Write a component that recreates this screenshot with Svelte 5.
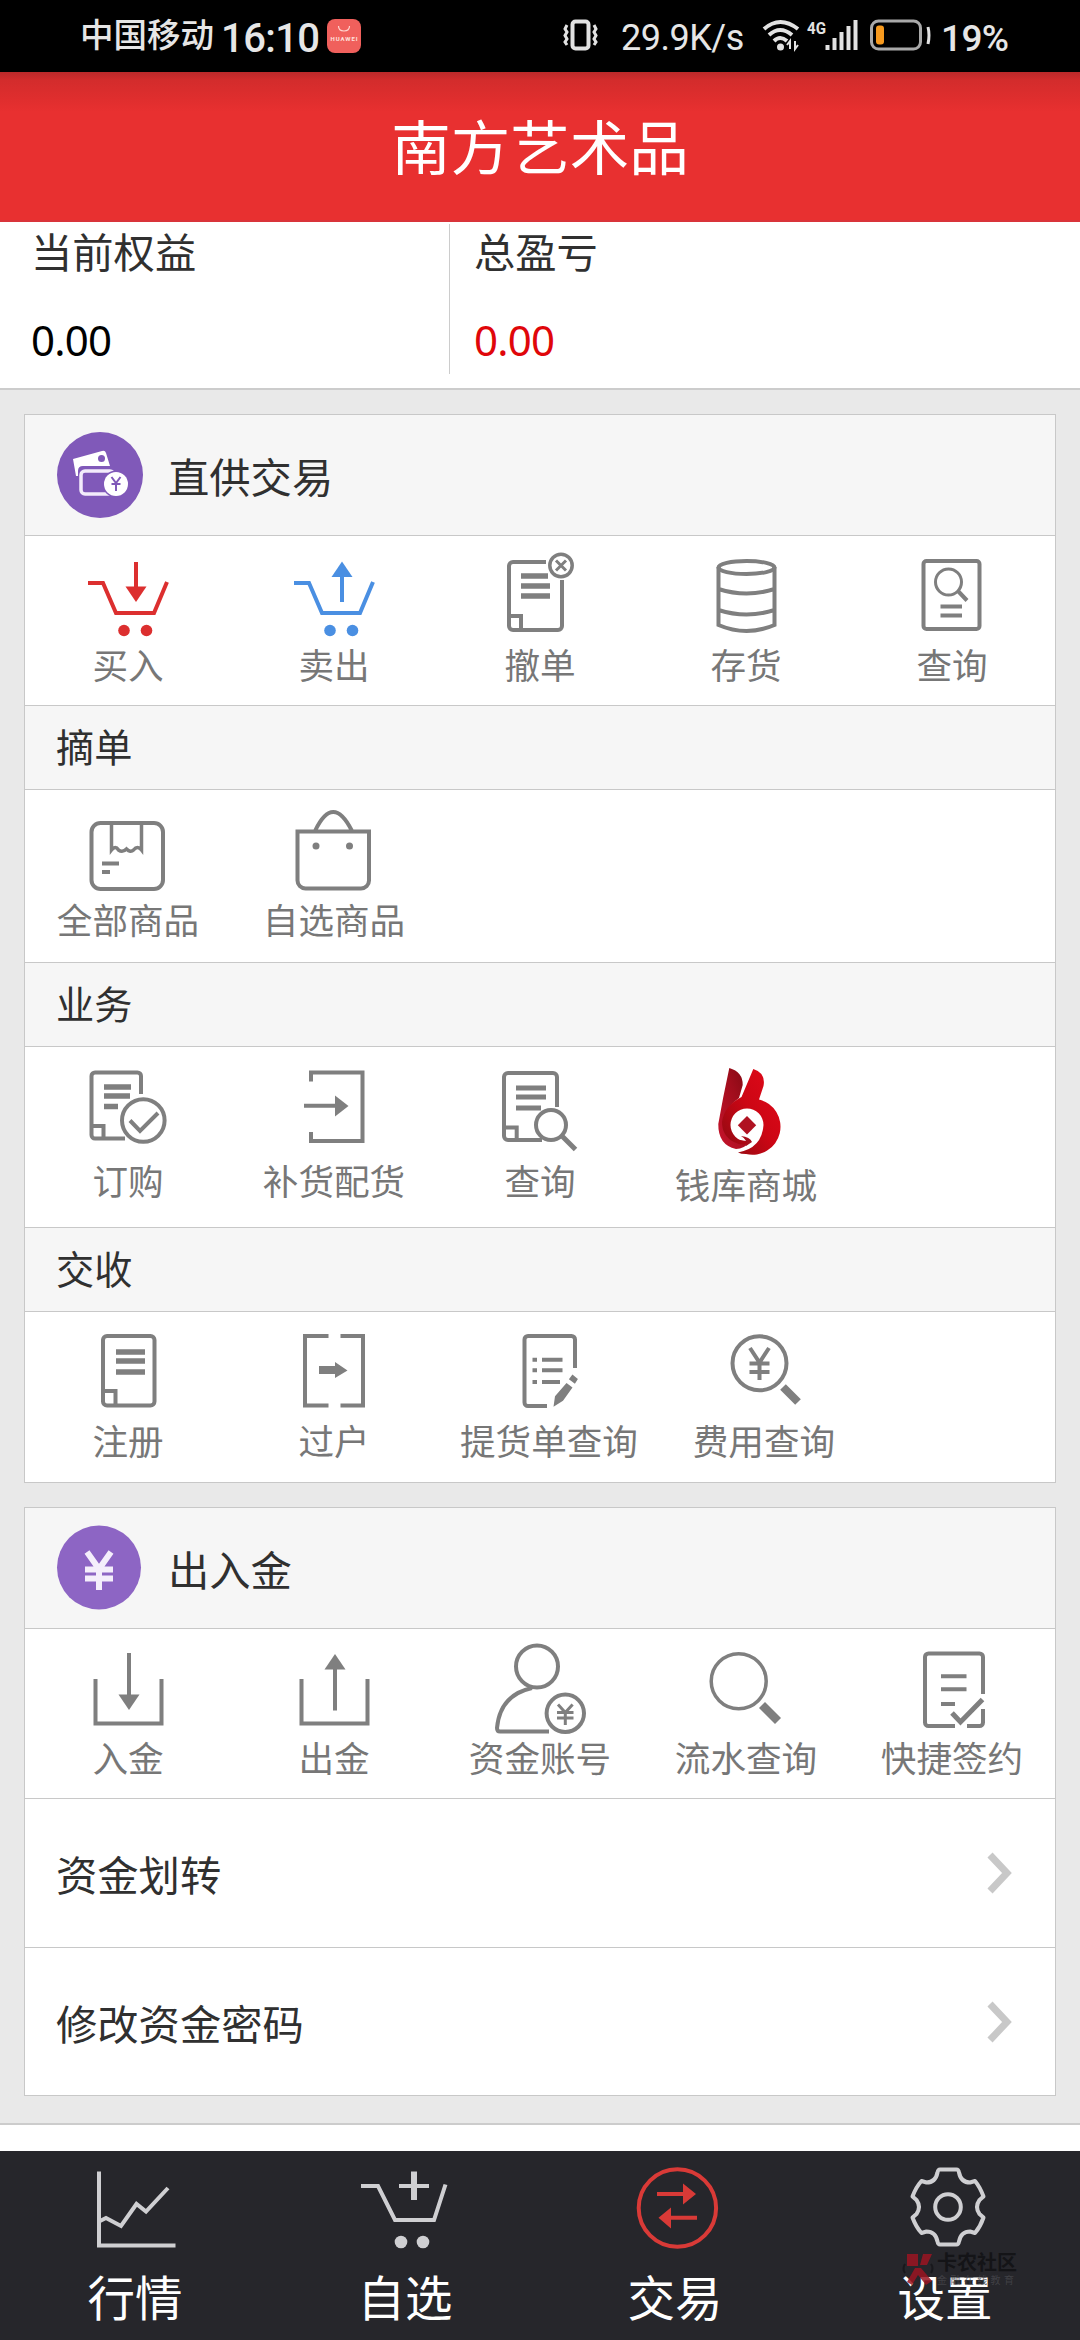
<script lang="ts">
  interface Action {
    label: string;
    icon: string;
    color?: string;
    low?: boolean;
  }

  interface Group {
    title?: string;
    size: "regular" | "medium" | "tall";
    actions: Action[];
  }

  const cart = `<path d="M20 47h15l13 30h38l13-31"/><g fill="currentColor" stroke="none"><circle cx="56" cy="94.500" r="5.800"/><circle cx="78.500" cy="94.500" r="5.800"/></g>`;

  // Inner markup of the action icons, drawn in a 120x111 box.
  const icons: Record<string, string> = {
    buy: `${cart}<path d="M68 26v26"/><path d="M57.500 50.500h21L68 66z" fill="currentColor" stroke="none"/>`,
    sell: `${cart}<path d="M68 66V40"/><path d="M57.500 41h21L68 25.500z" fill="currentColor" stroke="none"/>`,
    cancel: `<path d="M66 26H33a4 4 0 0 0-4 4v60a4 4 0 0 0 4 4h45a4 4 0 0 0 4-4V44M29 80h12v14"/><path stroke-width="5.500" d="M41 40h27M41 50h29M41 60h29"/><circle cx="81" cy="29.500" r="11.200" stroke-width="3.500"/><path stroke-width="3" d="M76 24.500l10 10M86 24.500l-10 10"/>`,
    stock: `<ellipse cx="60.500" cy="31.500" rx="28" ry="6.500"/><path d="M32.500 31v58q28 12 56 0V31M32.500 53q28 9 56 0M32.500 74q28 9 56 0"/>`,
    query: `<rect x="31.500" y="25" width="56" height="68" rx="3"/><circle cx="56.500" cy="46" r="13" stroke-width="3"/><path d="M66 55l9 9.500M48.500 70.500h21.500M48.500 79.500h21.500"/>`,
    box: `<rect x="23.500" y="32" width="71.500" height="66" rx="9"/><path stroke-width="3.500" d="M43.500 32v27q4-5 7 0 4 3 8-1 4 4 7 1 4-5 8 0V32"/><path d="M34 72.500h17M34 81h8"/>`,
    bag: `<path d="M23.500 40.500h71.500v49a8 8 0 0 1-8 8h-55.500a8 8 0 0 1-8-8zM41 40q18-38 37 0"/><g fill="currentColor" stroke="none"><circle cx="42" cy="55" r="3.500"/><circle cx="75.500" cy="55" r="3.500"/></g>`,
    order: `<path d="M73 42V24a3.500 3.500 0 0 0-3.500-3.500H27a3.500 3.500 0 0 0-3.500 3.500v59a3.500 3.500 0 0 0 3.500 3.500h30M24 74h11.500v12"/><path stroke-width="5.500" d="M36 35h27M36 44h26M36 54.500h14"/><circle cx="75.300" cy="68.500" r="21.300"/><path d="M62 68.500l10 10.500 18-18"/>`,
    restock: `<path d="M37 29.500V20.500h51.500V89H37v-9M30 53.700h32"/><path d="M61 43.500v21l13.500-10.500z" fill="currentColor" stroke="none"/>`,
    docSearch: `<path d="M77 55V25a4 4 0 0 0-4-4H28a4 4 0 0 0-4 4v59a4 4 0 0 0 4 4h34M24 75.500h12.700V88"/><path stroke-width="5.200" d="M36 36h30M36 45h30M36 56h25"/><circle cx="71" cy="73" r="15"/><path d="M82 84l13.500 13.500" stroke-width="5"/>`,
    mall: `<defs><linearGradient id="earL" x1="0" y1="1" x2="1" y2="0"><stop offset="0" stop-color="#c8142c"/><stop offset=".6" stop-color="#a00d1c"/><stop offset="1" stop-color="#7a0810"/></linearGradient><linearGradient id="earR" x1="0" y1="1" x2="1" y2="0"><stop offset="0" stop-color="#8a0a12"/><stop offset=".5" stop-color="#cc0614"/><stop offset="1" stop-color="#e20a1a"/></linearGradient></defs>
      <g stroke="none"><path fill="url(#earL)" d="M43.300 16Q57 20 56.700 33L53 46Q38 57 38 72 38 89 65 89 58 97 50 97 32 93 32.300 72Q37 45 43.300 16z"/><path fill="url(#earR)" d="M67.300 17Q80 21 77.500 34L73 47.500A28 28 0 0 1 60 102Q55 102 52 100.500 76 96 77.500 73A16.500 16.500 0 1 0 61 89.500L65 88Q60 96 48 90 36 84 36 70 38 54 55.500 45z"/><path fill="#b01222" d="M61 64l9.200 9.300-9.200 9.300-9.200-9.300z"/><path fill="#a5101c" d="M55 84q9 1 11 6l-6 4q2-6-5-10z"/></g>`,
    register: `<rect x="35" y="24" width="51.500" height="69.500" rx="4"/><path d="M35 79h12.500v14"/><path stroke-width="5.500" d="M48 40h29M48 49h29M48 60h29"/>`,
    transfer: `<path d="M54.500 24H31v69.500h23.500M66.500 24H89v69.500H66.500"/><path d="M45 54h16v-4l12.500 8.500L61 66v-4H45z" fill="currentColor" stroke="none"/>`,
    pickup: `<path d="M86 56V27.500a3.500 3.500 0 0 0-3.500-3.500H39a3.500 3.500 0 0 0-3.500 3.500v63a3.500 3.500 0 0 0 3.500 3.500h19"/><path d="M43.500 47.700h4.500M53 47.700h20.500M43.500 58.300h4.500M53 58.300h20.500M43.500 70h4.500M53 70h18"/><path fill="currentColor" stroke="none" d="M83.400 62.500l5.500 4.500-3 4.700-6-4.500zM77.500 71l6 4.500L74 88.700l-9.500 6 1.500-10.500z"/>`,
    fee: `<circle cx="55.500" cy="51.300" r="27"/><path d="M46 36l9.500 14.500L65 36M55.500 50v18M45.500 51.500h20M45.500 60h20"/><path stroke-width="8" d="M79 75l15 15"/>`,
    deposit: `<path d="M27.500 50v44.500h66V50M61 24v43"/><path d="M50.500 65.500h21L61 81z" fill="currentColor" stroke="none"/>`,
    withdraw: `<path d="M27.500 50v44.500h66V50M61 81.500V38"/><path d="M50.500 40.500h21L61 25z" fill="currentColor" stroke="none"/>`,
    account: `<circle cx="57" cy="37.500" r="21"/><path d="M52 59Q20 66 17 99q0 3.500 3 3.500h49"/><circle cx="85.300" cy="84.300" r="18.700"/><path stroke-width="3" d="M78 75.500l7.300 8 7.300-8M85.300 83.500V96M77 83.500h16.500M77 89h16.500"/>`,
    flow: `<circle cx="52.700" cy="52.300" r="27.500" stroke-width="3.500"/><path stroke-width="8.500" d="M76 76l16 16"/>`,
    sign: `<path d="M91 65V28a3.500 3.500 0 0 0-3.500-3.500h-51A3.500 3.500 0 0 0 33 28v65.500a3.500 3.500 0 0 0 3.500 3.500H63M75 97h12.500a3.500 3.500 0 0 0 3.500-3.500V80M49 47.300h25.500M49 60.300h25.500M49 75h14"/><path stroke-width="5" d="M60 84l8.500 9L90.500 70.500"/>`,
  };

  const tradeGroups: Group[] = [
    {
      size: "regular",
      actions: [
        { label: "买入", icon: "buy", color: "#dc2f2f" },
        { label: "卖出", icon: "sell", color: "#4a8fe2" },
        { label: "撤单", icon: "cancel" },
        { label: "存货", icon: "stock" },
        { label: "查询", icon: "query" },
      ],
    },
    {
      title: "摘单",
      size: "medium",
      actions: [
        { label: "全部商品", icon: "box" },
        { label: "自选商品", icon: "bag" },
      ],
    },
    {
      title: "业务",
      size: "tall",
      actions: [
        { label: "订购", icon: "order" },
        { label: "补货配货", icon: "restock" },
        { label: "查询", icon: "docSearch" },
        { label: "钱库商城", icon: "mall", low: true },
      ],
    },
    {
      title: "交收",
      size: "regular",
      actions: [
        { label: "注册", icon: "register" },
        { label: "过户", icon: "transfer" },
        { label: "提货单查询", icon: "pickup" },
        { label: "费用查询", icon: "fee" },
      ],
    },
  ];

  const fundGroup: Group = {
    size: "regular",
    actions: [
      { label: "入金", icon: "deposit" },
      { label: "出金", icon: "withdraw" },
      { label: "资金账号", icon: "account" },
      { label: "流水查询", icon: "flow" },
      { label: "快捷签约", icon: "sign" },
    ],
  };

  const links = ["资金划转", "修改资金密码"];

  const tabs = [
    {
      label: "行情",
      icon: `<path d="M24 20.500v74h76.500M25 70l6-3 15 8 15.500-22 9.500 7.500L93 37"/>`,
    },
    {
      label: "自选",
      icon: `<path d="M16 35h17l17 34h39l11.500-35.500M54 35h30"/><path stroke-width="6" d="M69 20.500v28.500"/><g fill="currentColor" stroke="none"><circle cx="56" cy="91" r="6.300"/><circle cx="78" cy="91" r="6.300"/></g>`,
    },
    {
      label: "交易",
      icon: `<circle cx="62.400" cy="57" r="38.700"/><path d="M42 43h27M82 66.700H55"/><path fill="currentColor" stroke="none" d="M68 32.500v21L81 43zM56 56.500v21L43.500 66.700z"/>`,
    },
    {
      label: "设置",
      icon: `<path stroke-linejoin="round" d="M55 18.500h16.500q2 0 2.500 3 2 10 11 10l5-1.500q5 6 8.500 15.500l-4 3.500q-5 7 0 14l4 3.500q-3 9-8.500 15.500l-5-1.500q-9 0-11 10-.5 3-2.500 3H55q-2 0-2.500-3-2-10-11-10l-5 1.500Q31 76 27.500 66.500l4-3.500q5-7 0-14l-4-3.500Q31 36 36.500 30l5 1.500q9 0 11-10 .5-3 2.500-3z"/><circle cx="63" cy="56" r="12.800"/>`,
    },
  ];

  let activeTab = $state("交易");
</script>

{#snippet actionRow(group: Group)}
  {#if group.title}
    <h3 class="group-title">{group.title}</h3>
  {/if}
  <div class="actions {group.size}">
    {#each group.actions as action}
      <div class="action" style:color={action.color}>
        <svg viewBox="0 0 120 111" fill="none" stroke="currentColor" stroke-width="4">{@html icons[action.icon]}</svg>
        <span class:low={action.low}>{action.label}</span>
      </div>
    {/each}
  </div>
{/snippet}

<div class="screen">
  <div class="status">
    <span class="carrier">中国移动</span>
    <span class="clock">16:10</span>
    <svg class="app-badge" viewBox="0 0 34 34">
      <rect width="34" height="34" rx="8" fill="#f0605c" />
      <path d="M11.500 7q0 5 5.500 5t5.500-5" fill="none" stroke="#ffd5cf" stroke-width="1.200" />
      <text x="17" y="22" text-anchor="middle" font-size="6" font-weight="700" textLength="27" fill="#ffe2de">HUAWEI</text>
    </svg>
    <svg class="vibrate" viewBox="0 0 40 34" fill="none" stroke="#e2e2e2">
      <rect x="11.500" y="2.500" width="16" height="27" rx="3" stroke-width="4" />
      <path d="M6 6l-2 4 2 3-2 3.500 2 3.500-2 3 2 3M33 6l2 4-2 3 2 3.500-2 3.500 2 3-2 3" stroke-width="3" />
    </svg>
    <span class="speed">29.9K/s</span>
    <svg class="signals" viewBox="0 0 170 36" fill="none" stroke="#e2e2e2">
      <path d="M3 11q16-14 34 0M8 17q11-10 23 0M13 23q6-6 13 0" stroke-width="4" />
      <circle cx="19.500" cy="29" r="3.500" fill="#e2e2e2" stroke="none" />
      <path d="M29 31v-8l-3 4M34 23v8l3-4" stroke-width="2" />
      <text x="46" y="16" font-size="17" font-weight="700" textLength="19" lengthAdjust="spacingAndGlyphs" fill="#e2e2e2" stroke="none">4G</text>
      <path d="M66.500 27v5M73.500 20v12M80.500 14v18M87.500 8v24M94.500 2v30" stroke-width="4" />
      <rect x="110.500" y="3" width="49" height="28" rx="7" stroke="#a9a9a9" stroke-width="3" />
      <path d="M167 9q2 8 0 17" stroke-width="3" />
      <rect x="115" y="7.500" width="8" height="19" rx="3" fill="#f79a1e" stroke="none" />
    </svg>
    <span class="battery">19%</span>
  </div>

  <header>南方艺术品</header>

  <section class="equity">
    <div class="figure">
      <span>当前权益</span>
      <b>0.00</b>
    </div>
    <div class="figure loss">
      <span>总盈亏</span>
      <b>0.00</b>
    </div>
  </section>

  <main>
    <section class="card">
      <h2>
        <svg viewBox="0 0 88 88">
          <circle cx="44" cy="44" r="43" fill="#8059b9" />
          <path d="M17 28l29-8q3-1 4 2l4 13H27q-5 0-5 5v5h-2z" fill="#fff" />
          <circle cx="45.500" cy="27.500" r="3.500" fill="#8059b9" />
          <rect x="25" y="40" width="33" height="23" rx="4" fill="none" stroke="#f3ecfb" stroke-width="3.500" />
          <circle cx="60" cy="53" r="13.500" fill="#8059b9" />
          <circle cx="60" cy="53" r="12" fill="#fff" />
          <path d="M55.500 46l4.500 6 4.500-6M60 52v8M55.500 53h9" fill="none" stroke="#8059b9" stroke-width="2" />
        </svg>
        直供交易
      </h2>
      {#each tradeGroups as group}
        {@render actionRow(group)}
      {/each}
    </section>

    <section class="card">
      <h2>
        <svg viewBox="0 0 88 88">
          <circle cx="43" cy="43.500" r="42" fill="#8d65c4" />
          <path d="M31 28l12 17 12-17M43 43v23M29 45.500h28M29 54.500h28" fill="none" stroke="#f4eefb" stroke-width="6" />
        </svg>
        出入金
      </h2>
      {@render actionRow(fundGroup)}
      {#each links as link}
        <div class="link">
          {link}
          <svg viewBox="0 0 28 44"><path d="M4 4l17 18L4 40" fill="none" stroke="#c8c8c8" stroke-width="7" /></svg>
        </div>
      {/each}
    </section>
  </main>

  <nav>
    {#each tabs as tab}
      <button class:active={activeTab === tab.label} onclick={() => (activeTab = tab.label)}>
        <svg viewBox="0 0 120 110" fill="none" stroke="currentColor" stroke-width="4">{@html tab.icon}</svg>
        <span>{tab.label}</span>
      </button>
    {/each}
    <div class="stamp">
      <svg viewBox="0 0 32 36">
        <path d="M5 2h11v12H5zM21 2h9l-5 11h-7zM13 16h6l11 13-6 4-8-10-6 10-5-3z" fill="#9b1522" />
        <path d="M3 12q-3 5 0 9M29 12q3 4 0 9" fill="none" stroke="#16161a" stroke-width="2" />
      </svg>
      <p><strong>卡农社区</strong><small>金融在线教育</small></p>
    </div>
  </nav>
</div>

<style>
  :global(body) {
    background: #fff;
  }

  .screen {
    display: flex;
    flex-direction: column;
    width: 1080px;
    height: 2340px;
    overflow: hidden;
    background: #fff;
    color: #303030;
    font-family: "Noto Sans", "Noto Sans CJK SC", sans-serif;
  }

  svg {
    display: block;
    flex: none;
  }

  .status {
    box-sizing: border-box;
    display: flex;
    align-items: center;
    height: 72px;
    padding: 0 72px 0 80px;
    background: #000;
    color: #e6e6e6;
    font-family: Roboto, "Noto Sans CJK SC", sans-serif;
    white-space: nowrap;
  }

  .carrier {
    width: 141px;
    font-size: 33.5px;
    font-weight: 500;
    line-height: 72px;
  }

  .clock {
    width: 106px;
    padding-top: 4px;
    font-size: 40px;
    font-weight: 500;
    letter-spacing: -0.6px;
  }

  .app-badge {
    width: 34px;
    height: 34px;
  }

  .vibrate {
    width: 40px;
    height: 34px;
    margin-left: auto;
  }

  .speed {
    width: 140px;
    margin-left: 20px;
    padding-top: 4px;
    font-size: 36px;
    letter-spacing: -0.5px;
  }

  .signals {
    width: 170px;
    height: 36px;
  }

  .battery {
    width: 67px;
    margin-left: 10px;
    padding-top: 4px;
    font-size: 37px;
    font-weight: 500;
    letter-spacing: -0.6px;
  }

  header {
    box-sizing: border-box;
    height: 150px;
    border-bottom: 2px solid #d9343a;
    background: linear-gradient(#bb292a, #d32c2c 8px, #e02e2e 28px, #e83030 40px);
    color: #fff;
    font-size: 59.5px;
    line-height: 150px;
    text-align: center;
  }

  .equity {
    box-sizing: border-box;
    display: flex;
    height: 168px;
    padding-top: 2px;
    border-bottom: 2px solid #ccc;
  }

  .figure {
    box-sizing: border-box;
    display: flex;
    flex-direction: column;
    width: 450px;
    height: 150px;
    padding-left: 31px;
    border-right: 1px solid #ccc;
    font-size: 41.3px;
    line-height: 56px;
  }

  .figure b {
    margin-top: 32px;
    color: #000;
    font-size: 42px;
    font-weight: 400;
    letter-spacing: -0.8px;
  }

  .figure.loss {
    padding-left: 24px;
    border-right: 0;
  }

  .figure.loss b {
    color: #e0060a;
  }

  main {
    box-sizing: border-box;
    display: flex;
    flex-direction: column;
    gap: 24px;
    height: 1735px;
    padding: 24px;
    border-bottom: 2px solid #ccc;
    background: #e9e9e9;
  }

  .card {
    border: 1px solid #c8c8c8;
    background: #fff;
  }

  h2,
  h3 {
    box-sizing: border-box;
    margin: 0;
    border-bottom: 1px solid #c8c8c8;
    background: #f6f6f6;
    font-weight: 400;
  }

  h2 {
    display: flex;
    align-items: center;
    gap: 24px;
    height: 121px;
    padding-left: 31px;
    font-size: 41.3px;
  }

  h2 svg {
    width: 88px;
    height: 88px;
  }

  .group-title {
    height: 84px;
    padding-left: 31px;
    border-top: 0;
    font-size: 38.2px;
    line-height: 83px;
  }

  .actions {
    box-sizing: border-box;
    display: flex;
    height: 170px;
    border-bottom: 1px solid #c8c8c8;
  }

  .actions:last-child {
    border-bottom: 0;
  }

  .actions.medium {
    height: 173px;
    padding-top: 1px;
  }

  .actions.tall {
    height: 181px;
    padding-top: 5px;
  }

  .action {
    box-sizing: border-box;
    display: flex;
    flex: none;
    flex-direction: column;
    align-items: center;
    min-width: 206px;
    padding: 0 23px;
    color: #7f7f7f;
  }

  .action svg {
    width: 120px;
    height: 111px;
    overflow: visible;
  }

  .action span {
    color: #777;
    font-size: 35.6px;
    line-height: 36px;
    white-space: nowrap;
  }

  .action .low {
    margin-top: 4px;
  }

  .link {
    box-sizing: border-box;
    display: flex;
    align-items: center;
    justify-content: space-between;
    height: 148px;
    padding: 0 41px 0 31px;
    font-size: 41.3px;
  }

  .link + .link {
    border-top: 1px solid #c8c8c8;
  }

  .link svg {
    width: 28px;
    height: 44px;
  }

  nav {
    position: relative;
    display: flex;
    height: 189px;
    margin-top: auto;
    background: #26262b;
  }

  nav button {
    display: flex;
    flex: 1;
    flex-direction: column;
    align-items: center;
    padding: 0;
    border: 0;
    background: none;
    color: #cfcfd2;
    font-family: inherit;
  }

  nav button.active {
    color: #d93a37;
  }

  nav button svg {
    width: 120px;
    height: 110px;
  }

  nav button span {
    margin-top: 12px;
    color: #fff;
    font-size: 47.5px;
    line-height: 50px;
  }

  .stamp {
    position: absolute;
    top: 101px;
    left: 902px;
    display: flex;
    gap: 3px;
    opacity: 0.85;
  }

  .stamp svg {
    width: 32px;
    height: 36px;
  }

  .stamp p {
    display: flex;
    flex-direction: column;
    margin: 0;
  }

  .stamp strong {
    color: #111114;
    font-size: 20px;
    line-height: 22px;
  }

  .stamp small {
    color: #45454a;
    font-size: 10px;
    letter-spacing: 3.4px;
    line-height: 12px;
  }
</style>
